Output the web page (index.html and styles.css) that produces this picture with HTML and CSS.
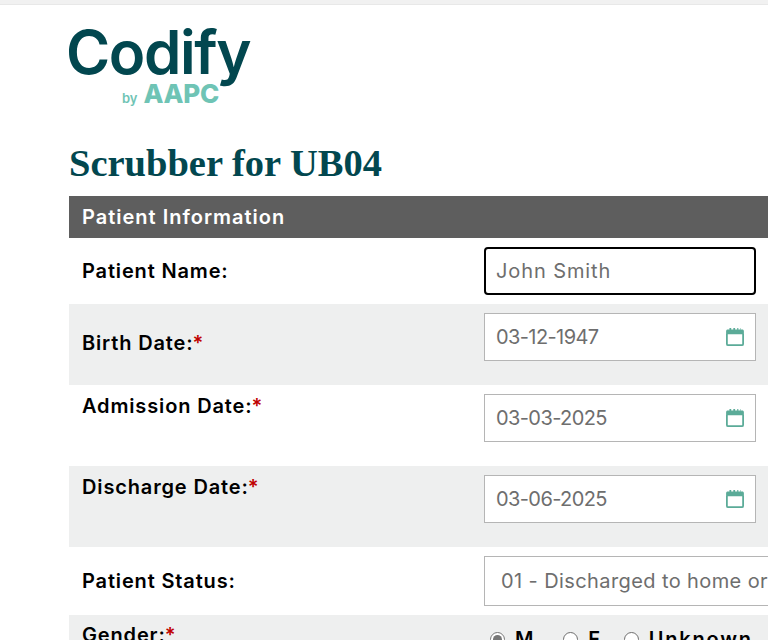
FILE: index.html
```html
<!DOCTYPE html>
<html lang="en">
<head>
<meta charset="utf-8">
<title>Scrubber for UB04</title>
<link rel="stylesheet" href="styles.css">
</head>
<body>
<div class="topline"></div>
<main class="page">
  <div class="logo">
    <div class="logo-word">Codify</div>
    <div class="logo-sub"><span class="logo-by">by</span><span class="logo-aapc">AAPC</span></div>
  </div>
  <h1 class="title">Scrubber for UB04</h1>
  <section class="form">
    <div class="section-head">Patient Information</div>
    <div class="row row-name">
      <label class="label">Patient Name:</label>
      <div class="field"><div class="input input-focus">John Smith</div></div>
    </div>
    <div class="row row-date shade">
      <label class="label">Birth Date:<span class="req">*</span></label>
      <div class="field"><div class="input input-date"><span class="date-text">03-12-1947</span><svg class="cal" viewBox="0 0 18 18"><path d="M1.7 6.2v9c0 .7.5 1.2 1.2 1.2h12.2c.7 0 1.2-.5 1.2-1.2v-9" fill="none" stroke="#5bab98" stroke-width="1.6"/><path d="M1 6.6V3.6c0-.8.6-1.4 1.4-1.4H4V.8h1.6v1.4h1.9V.8h1.6v1.4h1.9V.8H12v1.4h1.6V.8h.4v1.4h1.6c.8 0 1.4.6 1.4 1.4v3z" fill="#5bab98"/></svg></div></div>
    </div>
    <div class="row row-date row-top">
      <label class="label">Admission Date:<span class="req">*</span></label>
      <div class="field"><div class="input input-date"><span class="date-text">03-03-2025</span><svg class="cal" viewBox="0 0 18 18"><path d="M1.7 6.2v9c0 .7.5 1.2 1.2 1.2h12.2c.7 0 1.2-.5 1.2-1.2v-9" fill="none" stroke="#5bab98" stroke-width="1.6"/><path d="M1 6.6V3.6c0-.8.6-1.4 1.4-1.4H4V.8h1.6v1.4h1.9V.8h1.6v1.4h1.9V.8H12v1.4h1.6V.8h.4v1.4h1.6c.8 0 1.4.6 1.4 1.4v3z" fill="#5bab98"/></svg></div></div>
    </div>
    <div class="row row-date row-top shade">
      <label class="label">Discharge Date:<span class="req">*</span></label>
      <div class="field"><div class="input input-date"><span class="date-text">03-06-2025</span><svg class="cal" viewBox="0 0 18 18"><path d="M1.7 6.2v9c0 .7.5 1.2 1.2 1.2h12.2c.7 0 1.2-.5 1.2-1.2v-9" fill="none" stroke="#5bab98" stroke-width="1.6"/><path d="M1 6.6V3.6c0-.8.6-1.4 1.4-1.4H4V.8h1.6v1.4h1.9V.8h1.6v1.4h1.9V.8H12v1.4h1.6V.8h.4v1.4h1.6c.8 0 1.4.6 1.4 1.4v3z" fill="#5bab98"/></svg></div></div>
    </div>
    <div class="row row-status">
      <label class="label">Patient Status:</label>
      <div class="field"><div class="select">01 - Discharged to home or self care</div></div>
    </div>
    <div class="row row-gender shade">
      <label class="label">Gender:<span class="req">*</span></label>
      <div class="radios">
        <span class="radio-item"><span class="radio checked"></span>M</span>
        <span class="radio-item"><span class="radio"></span>F</span>
        <span class="radio-item"><span class="radio"></span>Unknown</span>
      </div>
    </div>
  </section>
</main>
</body>
</html>
```
FILE: styles.css
```css
html, body { margin: 0; padding: 0; height: 640px; overflow: hidden; background: #fff; }
body { font-family: "Inter", "Liberation Sans", sans-serif; color: #000; }
.topline { height: 5px; background: #f1f1f1; border-bottom: 1px solid #e8e8e8; box-sizing: border-box; }
.page { width: 760px; padding-left: 69px; }
.logo { height: 103px; padding-top: 19px; box-sizing: border-box; width: 184px; }
.logo-word { font-weight: 600; font-size: 60px; line-height: 56px; letter-spacing: -1.4px; color: #02474f; margin-left: -3px; }
.logo-sub { display: flex; align-items: baseline; gap: 6px; padding-left: 53px; margin-top: 2px; }
.logo-by { font-weight: 600; font-size: 13px; line-height: 24px; color: #6fc4b5; }
.logo-aapc { font-weight: 800; font-size: 26px; line-height: 24px; letter-spacing: -0.3px; color: #6fc4b5; }
.title { margin: 25px 0 0; height: 63px; font-family: "Liberation Serif", serif; font-weight: 700; font-size: 38.5px; line-height: 60px; color: #02474f; }
.form { width: 760px; }
.section-head { height: 42px; line-height: 42px; padding-left: 13px; background: #5e5e5e; color: #fff; font-weight: 600; font-size: 20px; letter-spacing: 1px; }
.row { display: grid; grid-template-columns: 415px 1fr; box-sizing: border-box; padding-top: 9px; }
.shade { background: #eeefef; }
.row-name { height: 66px; align-items: center; padding-top: 0; }
.row-date { height: 81px; }
.row-status { height: 68px; align-items: start; }
.row-gender { height: 40px; padding-top: 8px; }
.label { padding-left: 13px; font-size: 20px; font-weight: 600; line-height: 24px; letter-spacing: 0.85px; color: #000; }
.row-date .label { align-self: center; margin-top: -13px; }
.row-top .label { align-self: start; margin-top: 0; }
.row-status .label { padding-top: 13px; }
.req { color: #c00000; margin-left: -1px; }
.input, .select { box-sizing: border-box; background: #fff; border: 1px solid #b5b5b5; color: #6e6e6e; font-size: 20px; font-weight: 400; display: flex; align-items: center; white-space: nowrap; }
.input { width: 272px; height: 48px; padding-left: 11px; letter-spacing: 0.9px; }
.input-focus { border: 2px solid #000; border-radius: 4px; padding-left: 10px; }
.input-date { justify-content: space-between; padding-right: 10px; }
.date-text { letter-spacing: -0.6px; }
.cal { width: 20px; height: 20px; }
.select { width: 400px; height: 50px; padding-left: 16px; letter-spacing: 0.4px; }
.radios { display: flex; gap: 22px; padding-left: 6px; }
.radio-item { display: flex; align-items: center; gap: 10px; font-size: 20px; font-weight: 600; line-height: 24px; letter-spacing: 1.8px; }
.radio-item:first-child { margin-right: 6px; }
.radio { width: 15px; height: 15px; box-sizing: border-box; border: 1px solid #6e6e6e; border-radius: 50%; background: #fff; position: relative; }
.checked { border-color: #777; }
.checked::after { content: ""; position: absolute; inset: 2px; border-radius: 50%; background: #777; }
```
